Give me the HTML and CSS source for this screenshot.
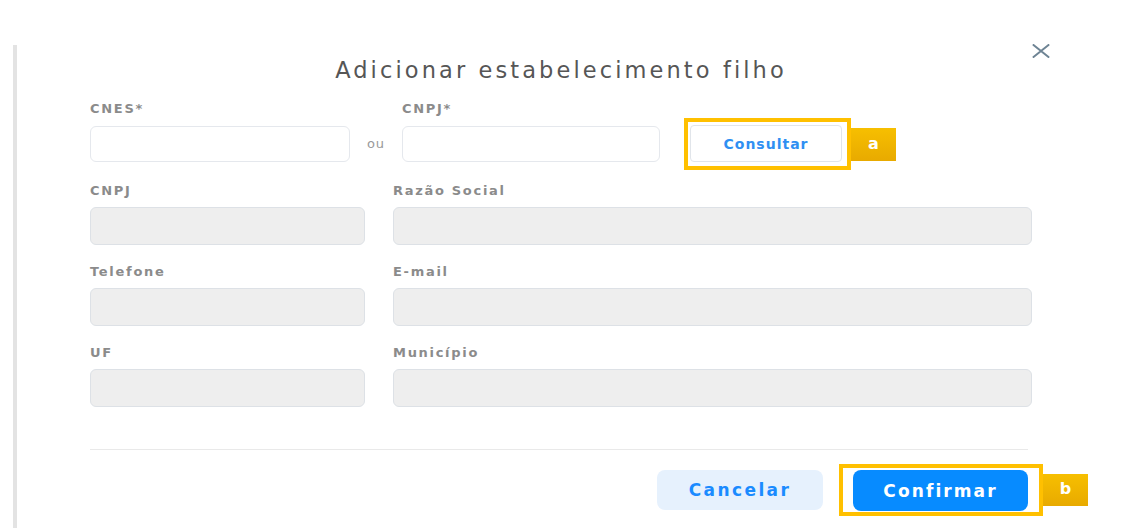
FILE: index.html
```html
<!DOCTYPE html>
<html lang="pt-BR">
<head>
<meta charset="utf-8">
<title>Adicionar estabelecimento filho</title>
<link rel="stylesheet" href="styles.css">
</head>
<body>
<div class="page">
  <div class="rail"></div>
  <div class="modal">
    <div class="header">
      <h1 class="title">Adicionar estabelecimento filho</h1>
      <button class="close" type="button" aria-label="Fechar">
        <svg width="18" height="14" viewBox="0 0 18 14"><path d="M1.5 1 L16.5 13 M16.5 1 L1.5 13" stroke="#6e8494" stroke-width="2" fill="none" stroke-linecap="round"/></svg>
      </button>
    </div>

    <div class="lookup">
      <div class="field cnes">
        <label class="label">CNES*</label>
        <div class="input"></div>
      </div>
      <div class="ou">ou</div>
      <div class="field cnpj">
        <label class="label">CNPJ*</label>
        <div class="input"></div>
      </div>
      <div class="mark mark-a">
        <div class="hl hl-small">
          <button class="btn-consult" type="button">Consultar</button>
        </div>
        <div class="badge">a</div>
      </div>
    </div>

    <div class="grid">
      <div class="field"><label class="label">CNPJ</label><div class="input ro"></div></div>
      <div class="field"><label class="label">Razão Social</label><div class="input ro"></div></div>
      <div class="field"><label class="label">Telefone</label><div class="input ro"></div></div>
      <div class="field"><label class="label">E-mail</label><div class="input ro"></div></div>
      <div class="field"><label class="label">UF</label><div class="input ro"></div></div>
      <div class="field"><label class="label">Município</label><div class="input ro"></div></div>
    </div>

    <div class="divider"></div>

    <div class="footer">
      <button class="btn-cancel" type="button">Cancelar</button>
      <div class="mark mark-b">
        <div class="hl hl-big">
          <button class="btn-confirm" type="button">Confirmar</button>
        </div>
        <div class="badge badge-b">b</div>
      </div>
    </div>
  </div>
</div>
</body>
</html>
```
FILE: styles.css
```css
html, body {
  margin: 0;
  padding: 0;
  background: #ffffff;
}
body {
  font-family: "DejaVu Sans", "Noto Sans", sans-serif;
  width: 1130px;
  height: 528px;
  overflow: hidden;
}
.page {
  display: flex;
  height: 528px;
}
.rail {
  flex: none;
  width: 4px;
  margin: 45px 0 0 13px;
  background: #e3e3e3;
}
.modal {
  flex: none;
  width: 942px;
  margin-left: 73px;
  padding-top: 43px;
}
.header {
  display: grid;
  grid-template-columns: 1fr auto 1fr;
  align-items: start;
}
.title {
  grid-column: 2;
  margin: 14px 0 0;
  font-family: "DejaVu Sans", sans-serif;
  font-weight: normal;
  font-size: 22.5px;
  line-height: 26px;
  letter-spacing: 3.1px;
  color: #565656;
}
.close {
  grid-column: 3;
  justify-self: end;
  margin-right: -18px;
  margin-top: 1px;
  padding: 0;
  border: 0;
  background: none;
  width: 18px;
  height: 14px;
  display: block;
}
.close svg { display: block; }

.label {
  display: block;
  font-weight: bold;
  font-size: 13px;
  line-height: 16px;
  color: #8b8b8b;
  margin-bottom: 8px;
  letter-spacing: 1.7px;
}
.lookup {
  display: flex;
  align-items: flex-end;
  margin-top: 18px;
}
.lookup .label { margin-bottom: 9px; }
.field.cnes { width: 260px; }
.field.cnpj { width: 258px; }
.input {
  box-sizing: border-box;
  height: 36px;
  border: 1px solid #e5e8ed;
  border-radius: 6px;
  background: #ffffff;
}
.ou {
  width: 52px;
  height: 36px;
  line-height: 36px;
  text-align: center;
  font-size: 13px;
  letter-spacing: 1px;
  color: #999999;
}
.mark {
  display: flex;
  align-items: center;
}
.mark-a {
  margin-left: 24px;
  margin-bottom: -8px;
}
.hl {
  border: 4px solid #ffc000;
  background: #ffffff;
}
.hl-small {
  padding: 3px 5px 4px 2px;
}
.btn-consult {
  display: block;
  box-sizing: border-box;
  width: 152px;
  height: 37px;
  border: 1px solid #e1e5ea;
  border-radius: 4px;
  background: #ffffff;
  color: #2f8ff2;
  font-family: "DejaVu Sans", sans-serif;
  font-weight: bold;
  font-size: 14px;
  letter-spacing: 1px;
  padding: 0;
}
.badge {
  width: 45px;
  height: 33px;
  background: linear-gradient(#f7bf00, #e8aa00);
  color: #ffffff;
  font-weight: bold;
  font-size: 16px;
  line-height: 31px;
  text-align: center;
}
.grid {
  display: grid;
  grid-template-columns: 275px 639px;
  column-gap: 28px;
  row-gap: 19px;
  margin-top: 21px;
}
.input.ro {
  height: 38px;
  background: #eeeeee;
  border-color: #dde1e6;
}
.divider {
  margin-top: 42px;
  width: 938px;
  height: 1px;
  background: #e9e9e9;
}
.footer {
  display: flex;
  justify-content: flex-end;
  align-items: center;
  margin-top: 14px;
  margin-right: -56px;
}
.btn-cancel {
  width: 166px;
  height: 40px;
  border: 0;
  border-radius: 8px;
  background: #e6f1fd;
  color: #1a8bff;
  font-family: "DejaVu Sans", sans-serif;
  font-weight: bold;
  font-size: 17px;
  letter-spacing: 2.4px;
  padding: 0;
  margin-right: 16px;
}
.hl-big {
  padding: 2px 11px 1px 10px;
}
.btn-confirm {
  display: block;
  width: 175px;
  height: 41px;
  border: 0;
  border-radius: 8px;
  background: #078bff;
  color: #ffffff;
  font-family: "DejaVu Sans", sans-serif;
  font-weight: bold;
  font-size: 17px;
  letter-spacing: 2.1px;
  padding: 0;
}
.badge-b {
  height: 32px;
  line-height: 30px;
}
```
